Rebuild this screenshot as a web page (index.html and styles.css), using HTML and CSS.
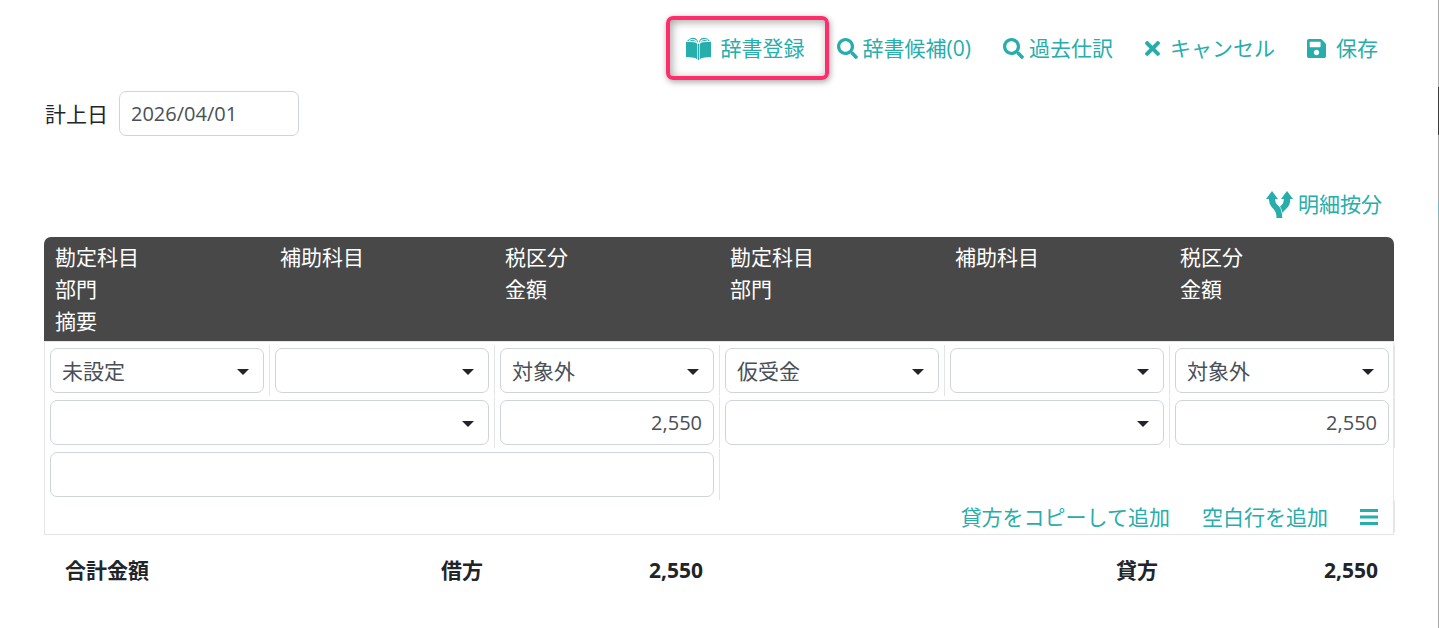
FILE: index.html
```html
<!DOCTYPE html>
<html lang="ja">
<head>
<meta charset="utf-8">
<title>仕訳入力</title>
<link rel="stylesheet" href="styles.css">
</head>
<body>
<svg class="sprite" aria-hidden="true">
  <symbol id="search" viewBox="0 0 512 512"><path d="M505 442.7 405.300 343c-4.500-4.500-10.600-7-17-7H372c27.600-35.300 44-79.700 44-128C416 93.100 322.900 0 208 0S0 93.100 0 208s93.100 208 208 208c48.300 0 92.700-16.400 128-44v16.300c0 6.400 2.500 12.500 7 17l99.700 99.700c9.400 9.400 24.600 9.400 33.900 0l28.300-28.300c9.400-9.400 9.400-24.600.1-34zM208 336c-70.700 0-128-57.200-128-128 0-70.700 57.200-128 128-128 70.700 0 128 57.200 128 128 0 70.700-57.200 128-128 128z"/></symbol>
  <symbol id="times" viewBox="0 0 352 352"><path d="M242.700 176 342.800 75.900c12.300-12.300 12.300-32.200 0-44.500L320.600 9.200c-12.300-12.300-32.200-12.300-44.500 0L176 109.300 75.900 9.200c-12.300-12.300-32.200-12.300-44.500 0L9.200 31.500c-12.300 12.300-12.300 32.200 0 44.500L109.300 176 9.200 276.100c-12.300 12.300-12.300 32.200 0 44.500l22.200 22.200c12.300 12.300 32.200 12.300 44.500 0L176 242.700l100.100 100.100c12.300 12.300 32.200 12.300 44.500 0l22.200-22.200c12.300-12.300 12.300-32.200 0-44.500z"/></symbol>
  <symbol id="save" viewBox="0 32 448 448"><path d="M433.900 129.900l-83.900-83.900A48 48 0 0 0 316.100 32H48C21.500 32 0 53.500 0 80v352c0 26.500 21.500 48 48 48h352c26.500 0 48-21.500 48-48V163.900a48 48 0 0 0-14.100-34zM224 416c-35.300 0-64-28.700-64-64s28.700-64 64-64 64 28.700 64 64-28.700 64-64 64zm96-304.500V212c0 6.600-5.400 12-12 12H76c-6.600 0-12-5.400-12-12V108c0-6.600 5.400-12 12-12h228.500c3.200 0 6.200 1.300 8.500 3.500l3.500 3.500a12 12 0 0 1 3.500 8.500z"/></symbol>
  <symbol id="book" viewBox="0 0 24 22"><path d="M0 4.500 8 5Q10.500 5.300 10.800 7V21.200Q9 19.800 6 19.600L0 19.200zM24 4.500 16 5Q13.500 5.300 13.200 7V21.200Q15 19.800 18 19.600L24 19.200zM11.400 6.500h1.200V22h-1.200z"/><path d="M1 3.600Q5-.5 9 1.200Q11.500 2.500 11.700 5.500Q10.500 4.300 8.500 4.100zM23 3.600Q19-.5 15 1.200Q12.500 2.500 12.300 5.500Q13.500 4.300 15.500 4.100z"/><path class="cut" d="M3 3.300Q7 1 10.600 4.200M21 3.300Q17 1 13.400 4.200"/></symbol>
  <symbol id="fork" viewBox="0 0 27 27"><path d="M6 0 12 8H9.200Q8.700 12 12 14.500Q14.500 16.500 15 19Q16 22 16.300 27H10.500Q10.500 21 7.500 18Q3 14 2.800 8H0z"/><path d="M21 0 27 8H24.200Q24.500 14 20 18Q17.500 20 16.500 22Q16 18 14 15.500Q18 13 17.800 8H15z"/></symbol>
  <symbol id="bars" viewBox="0 0 18 16"><path d="M0 0h18v3H0zM0 6.500h18v3H0zM0 13h18v3H0z"/></symbol>
</svg>
<div class="page">
  <main class="content">
    <nav class="toolbar" aria-label="操作">
      <button type="button" class="action action-wide marked"><svg class="icon icon-book"><use href="#book"/></svg>辞書登録</button>
      <button type="button" class="action"><svg class="icon icon-search"><use href="#search"/></svg>辞書候補(0)</button>
      <button type="button" class="action"><svg class="icon icon-search"><use href="#search"/></svg>過去仕訳</button>
      <button type="button" class="action action-wide"><svg class="icon icon-times"><use href="#times"/></svg>キャンセル</button>
      <button type="button" class="action action-wide"><svg class="icon icon-save"><use href="#save"/></svg>保存</button>
    </nav>
    <div class="date-row">
      <label for="date">計上日</label>
      <input id="date" class="control date" type="text" value="2026/04/01">
    </div>
    <div class="split-row">
      <button type="button" class="action split"><svg class="icon icon-fork"><use href="#fork"/></svg>明細按分</button>
    </div>
    <section class="entry">
      <div class="head">
        <div><span>勘定科目</span><span>部門</span><span>摘要</span></div>
        <div><span>補助科目</span></div>
        <div><span>税区分</span><span>金額</span></div>
        <div><span>勘定科目</span><span>部門</span></div>
        <div><span>補助科目</span></div>
        <div><span>税区分</span><span>金額</span></div>
      </div>
      <div class="body">
        <div class="lines">
          <div class="cell pick"><select class="control" aria-label="借方 勘定科目"><option>未設定</option></select></div>
          <div class="cell pick"><select class="control" aria-label="借方 補助科目"><option></option></select></div>
          <div class="cell pick"><select class="control" aria-label="借方 税区分"><option>対象外</option></select></div>
          <div class="cell pick"><select class="control" aria-label="貸方 勘定科目"><option>仮受金</option></select></div>
          <div class="cell pick"><select class="control" aria-label="貸方 補助科目"><option></option></select></div>
          <div class="cell pick"><select class="control" aria-label="貸方 税区分"><option>対象外</option></select></div>
          <div class="cell pick span-2"><select class="control" aria-label="借方 部門"><option></option></select></div>
          <div class="cell"><input class="control amount" type="text" value="2,550" aria-label="借方 金額"></div>
          <div class="cell pick span-2"><select class="control" aria-label="貸方 部門"><option></option></select></div>
          <div class="cell"><input class="control amount" type="text" value="2,550" aria-label="貸方 金額"></div>
          <div class="cell span-3"><input class="control" type="text" aria-label="摘要"></div>
          <div class="row-actions">
            <button type="button" class="link">貸方をコピーして追加</button>
            <button type="button" class="link">空白行を追加</button>
            <button type="button" class="link" aria-label="メニュー"><svg class="icon icon-bars"><use href="#bars"/></svg></button>
          </div>
        </div>
      </div>
      <div class="totals">
        <span class="title">合計金額</span>
        <span class="side">借方</span>
        <span class="sum">2,550</span>
        <span class="side credit">貸方</span>
        <span class="sum">2,550</span>
      </div>
    </section>
  </main>
  <div class="edge"></div>
</div>
</body>
</html>
```
FILE: styles.css
```css
* {
  box-sizing: border-box;
}

body {
  margin: 0;
  background: #fff;
  color: #212529;
  font-family: "Open Sans", "Noto Sans CJK JP", sans-serif;
  font-size: 21px;
  line-height: 32px;
}

button,
input,
select {
  font-family: inherit;
  font-size: inherit;
  line-height: inherit;
}

.sprite {
  position: absolute;
  width: 0;
  height: 0;
}

.page {
  display: flex;
  min-height: 100vh;
}

.content {
  flex: 1;
  min-width: 0;
  padding: 16px 44px 0;
}

.edge {
  width: 1px;
  background: linear-gradient(#aaa 87px, #3c3c3c 87px, #3c3c3c 135px, #aaa 135px, #aaa 202px, #7fb3c4 202px, #7fb3c4 216px, #aaa 216px);
}

.toolbar {
  display: flex;
  justify-content: flex-end;
  height: 64px;
}

.action {
  display: flex;
  align-items: center;
  gap: 5px;
  padding: 0 16px;
  border: 0;
  background: none;
  color: #27adab;
  white-space: nowrap;
}

.action-wide {
  gap: 10px;
}

.marked {
  position: relative;
}

.marked::after {
  content: "";
  position: absolute;
  inset: 0 -8px 0 -4px;
  border: 4px solid #ff2d6b;
  border-radius: 7px;
  box-shadow: 1px 2px 6px rgba(0, 0, 0, 0.35), inset 2px 2px 8px rgba(0, 0, 0, 0.35);
  pointer-events: none;
}

.icon {
  display: block;
  flex: none;
  fill: currentColor;
}

.cut {
  fill: none;
  stroke: #fff;
  stroke-width: 1;
}

.icon-book {
  width: 25px;
  height: 23px;
}

.icon-search {
  width: 21px;
  height: 21px;
}

.icon-times {
  width: 15px;
  height: 15px;
}

.icon-save {
  width: 19px;
  height: 19px;
}

.icon-fork {
  width: 27px;
  height: 27px;
}

.icon-bars {
  width: 18px;
  height: 16px;
}

.date-row {
  display: flex;
  align-items: center;
  gap: 11px;
  margin-top: 11px;
  padding-left: 1px;
}

.control {
  display: block;
  width: 100%;
  height: 45px;
  padding: 0 11px;
  border: 1px solid #ced4da;
  border-radius: 7px;
  background: #fff;
  color: #495057;
}

.date {
  width: 180px;
  font-size: 20px;
}

.amount {
  font-size: 20px;
  text-align: right;
}

select.control {
  appearance: none;
}

.split-row {
  display: flex;
  justify-content: flex-end;
  margin-top: 52px;
}

.split {
  padding: 0 12px;
}

.entry {
  margin-top: 17px;
}

.head {
  display: grid;
  grid-template-columns: repeat(6, 1fr);
  padding: 4px 0;
  border-radius: 7px 7px 0 0;
  background: #484848;
  color: #fff;
}

.head span {
  display: block;
  padding-left: 11px;
}

.body {
  padding: 3px 0 2px;
  border: 1px solid #e5e5e5;
}

.lines {
  display: grid;
  grid-template-columns: repeat(6, 1fr);
  row-gap: 1px;
  margin-right: -2px;
}

.cell {
  position: relative;
  padding: 3px 5px;
  border-right: 1px solid #e5e5e5;
}

.pick::after {
  content: "";
  position: absolute;
  top: 24px;
  right: 20px;
  border: 6px solid transparent;
  border-top-color: #212529;
  border-bottom: 0;
  pointer-events: none;
}

.span-2 {
  grid-column: span 2;
}

.span-3 {
  grid-column: span 3;
}

.row-actions {
  grid-column: 1 / -1;
  display: flex;
  justify-content: flex-end;
  align-items: center;
  gap: 32px;
  height: 31px;
  padding-right: 16px;
  border-right: 1px solid #e5e5e5;
}

.link {
  padding: 0;
  border: 0;
  background: none;
  color: #27adab;
}

.totals {
  display: grid;
  grid-template-columns: repeat(6, 1fr);
  padding-top: 19px;
  font-weight: 700;
}

.title {
  padding-left: 21px;
}

.side {
  padding-right: 11px;
  text-align: right;
}

.credit {
  grid-column: 5;
}

.sum {
  padding-right: 16px;
  text-align: right;
}
```
